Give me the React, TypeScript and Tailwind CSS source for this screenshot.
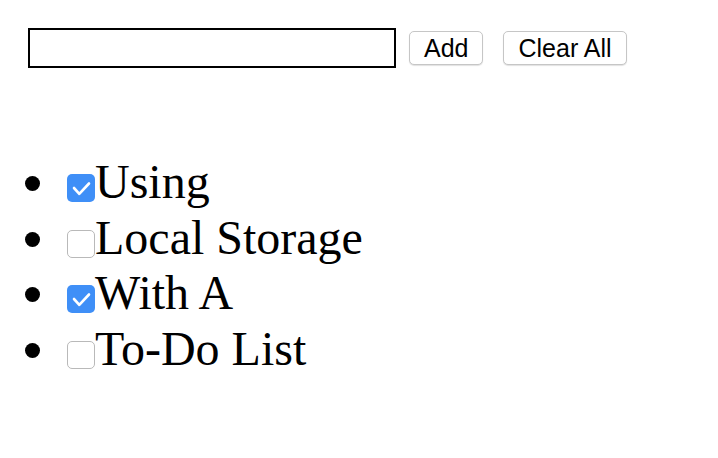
import React from 'react';

const items = [
  { text: 'Using', done: true },
  { text: 'Local Storage', done: false },
  { text: 'With A', done: true },
  { text: 'To-Do List', done: false },
];

function Box({ done }: { done: boolean }) {
  if (done) {
    return (
      <span className="inline-block w-[28px] h-[28px] rounded-[5px] bg-[#3f8ff7] align-[-4px]">
        <svg width="28" height="28" viewBox="0 0 28 28" fill="none" className="block">
          <path d="M7 14 L12.3 19.8 L22 9.5" stroke="white" strokeWidth="2.6" strokeLinecap="round" strokeLinejoin="round" />
        </svg>
      </span>
    );
  }
  return (
    <span className="inline-block w-[28px] h-[28px] rounded-[5px] border border-[#b9b9b9] bg-white align-[-4px]" />
  );
}

export default function App() {
  return (
    <div className="w-[718px] h-[458px] bg-white pt-[28px] pl-[28px]">
      {/* input row */}
      <div className="flex items-center font-['Liberation_Sans',Arial,sans-serif]">
        <input type="text" className="w-[368px] h-[40px] border-2 border-black outline-none" />
        <button className="ml-[13px] h-[34px] px-[14px] text-[25px] leading-none text-black bg-white border border-[#c6c6c6] rounded-[5px] shadow-[0_1px_1px_rgba(0,0,0,0.12)]">
          Add
        </button>
        <button className="ml-[20px] h-[34px] px-[14px] text-[25px] leading-none text-black bg-white border border-[#c6c6c6] rounded-[5px] shadow-[0_1px_1px_rgba(0,0,0,0.12)]">
          Clear All
        </button>
      </div>

      {/* list */}
      <ul className="mt-[86px] -ml-[3px] font-['Liberation_Serif','Times_New_Roman',serif] text-[48px] leading-[55.5px] text-black">
        {items.map((it) => (
          <li key={it.text}>
            <span className="inline-block w-[15px] h-[15px] mr-[27px] rounded-full bg-black align-[7px]" />
            <Box done={it.done} />
            {it.text}
          </li>
        ))}
      </ul>
    </div>
  );
}
